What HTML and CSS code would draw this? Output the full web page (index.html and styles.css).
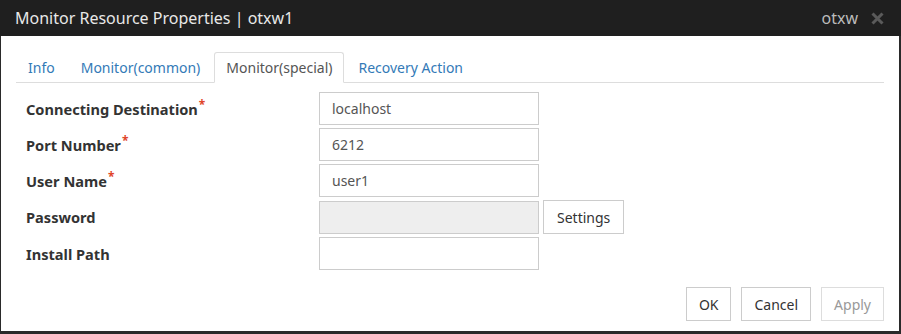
FILE: index.html
```html
<!DOCTYPE html>
<html lang="en">

<head>
  <meta charset="UTF-8">
  <meta name="viewport" content="width=device-width, initial-scale=1.0">
  <title>Monitor Resource Properties</title>
  <link rel="stylesheet" href="styles.css">
</head>

<body>

  <div class="dialog">
    <div class="dialog-header">
      <span class="dialog-title">Monitor Resource Properties | otxw1</span>
      <span class="dialog-server">otxw</span>
      <span class="dialog-close">
        <svg width="13" height="13" viewBox="0 0 13 13">
          <path d="M1.5 1.5 L11.5 11.5 M11.5 1.5 L1.5 11.5" stroke="#5a5a5a" stroke-width="3" />
        </svg>
      </span>
    </div>

    <div class="dialog-body">
      <ul class="tabs">
        <li><a href="#">Info</a></li>
        <li><a href="#">Monitor(common)</a></li>
        <li class="active"><a href="#">Monitor(special)</a></li>
        <li><a href="#">Recovery Action</a></li>
      </ul>

      <form class="props">
        <div class="row">
          <label>Connecting Destination<sup>*</sup></label>
          <input type="text" value="localhost">
        </div>
        <div class="row">
          <label>Port Number<sup>*</sup></label>
          <input type="text" value="6212">
        </div>
        <div class="row">
          <label>User Name<sup>*</sup></label>
          <input type="text" value="user1">
        </div>
        <div class="row">
          <label>Password</label>
          <input type="password" disabled>
          <button type="button" class="btn settings">Settings</button>
        </div>
        <div class="row">
          <label>Install Path</label>
          <input type="text" value="">
        </div>
      </form>
    </div>

    <div class="dialog-footer">
      <button type="button" class="btn">OK</button>
      <button type="button" class="btn">Cancel</button>
      <button type="button" class="btn" disabled>Apply</button>
    </div>
  </div>

</body>

</html>
```

FILE: styles.css
```css
body {
  margin: 0;
  padding: 0;
  font-family: 'Noto Sans', 'Noto Sans CJK JP', sans-serif;
  background-color: #fff;
}

.dialog {
  width: 901px;
  height: 334px;
  box-sizing: border-box;
  border-left: 1px solid #2a2a2a;
  border-right: 2px solid #2a2a2a;
  border-bottom: 3px solid #2a2a2a;
  background-color: #fff;
  display: flex;
  flex-direction: column;
}

.dialog-header {
  height: 36px;
  background-color: #1f1f1f;
  display: flex;
  align-items: center;
  padding: 0 16px 0 15px;
  margin-left: -1px;
  margin-right: -2px;
}

.dialog-title {
  color: #e8e8e8;
  font-size: 16px;
  flex-grow: 1;
}

.dialog-server {
  color: #bbb;
  font-size: 16px;
  margin-right: 13px;
}

.dialog-close {
  display: flex;
  margin-right: 1px;
}

.dialog-body {
  padding: 16px 15px 0 15px;
  flex-grow: 1;
}

.tabs {
  list-style: none;
  margin: 0;
  padding: 0;
  display: flex;
  border-bottom: 1px solid #ddd;
}

.tabs li {
  margin-right: 2px;
  margin-bottom: -1px;
}

.tabs a {
  display: block;
  height: 29px;
  line-height: 29px;
  padding: 0 11px;
  border: 1px solid transparent;
  border-radius: 3px 3px 0 0;
  color: #337ab7;
  font-size: 14px;
  text-decoration: none;
}

.tabs .active a {
  color: #555;
  border-color: #ddd;
  border-bottom-color: #fff;
  background-color: #fff;
}

.props {
  display: flex;
  flex-direction: column;
  gap: 3px;
  padding-top: 9px;
}

.row {
  display: flex;
  align-items: center;
}

.row label {
  width: 303px;
  box-sizing: border-box;
  padding-left: 10px;
  font-weight: bold;
  font-size: 14.6px;
  color: #333;
}

.row label sup {
  color: #e0452a;
  font-size: 12px;
  line-height: 0;
  margin-left: 1px;
}

input {
  width: 220px;
  height: 33px;
  box-sizing: border-box;
  padding: 0 12px;
  border: 1px solid #ccc;
  font-family: inherit;
  font-size: 14px;
  color: #555;
  outline: none;
}

input:disabled {
  background-color: #eee;
}

.btn {
  height: 34px;
  padding: 0 12px;
  border: 1px solid #ccc;
  background-color: #fff;
  color: #333;
  font-family: inherit;
  font-size: 14px;
  cursor: pointer;
}

.btn.settings {
  margin-left: 4px;
  padding: 0 13px;
}

.btn:disabled {
  color: #999;
  border-color: #ddd;
  cursor: default;
}

.dialog-footer {
  display: flex;
  justify-content: flex-end;
  gap: 10px;
  padding: 0 15px 10px 0;
}
```
